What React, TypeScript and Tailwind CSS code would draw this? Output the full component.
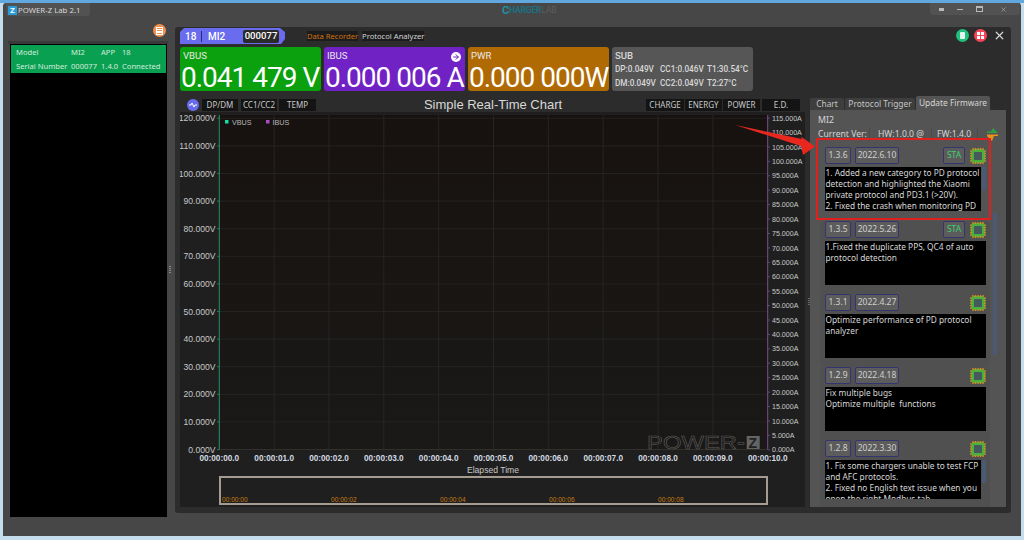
import { ArrowRight, X } from "lucide-react";

const SANS = "font-['Noto_Sans','Open_Sans',sans-serif]";

type Release = {
  version: string;
  date: string;
  stable?: boolean;
  lines: string[];
  boxClass: string;
  scroll?: boolean;
};

const RELEASES: Release[] = [
  {
    version: "1.3.6",
    date: "2022.6.10",
    stable: true,
    scroll: true,
    boxClass: "h-[44px]",
    lines: [
      "1. Added a new category to PD protocol",
      "detection and highlighted the Xiaomi",
      "private protocol and PD3.1 (>20V).",
      "2. Fixed the crash when monitoring PD",
    ],
  },
  {
    version: "1.3.5",
    date: "2022.5.26",
    stable: true,
    boxClass: "h-[44px]",
    lines: ["1.Fixed the duplicate PPS, QC4 of auto", "protocol detection"],
  },
  {
    version: "1.3.1",
    date: "2022.4.27",
    boxClass: "h-[44px]",
    lines: ["Optimize performance of PD protocol", "analyzer"],
  },
  {
    version: "1.2.9",
    date: "2022.4.18",
    boxClass: "h-[44px]",
    lines: ["Fix multiple bugs", "Optimize multiple  functions"],
  },
  {
    version: "1.2.8",
    date: "2022.3.30",
    scroll: true,
    boxClass: "h-[39px]",
    lines: [
      "1. Fix some chargers unable to test FCP",
      "and AFC protocols.",
      "2. Fixed no English text issue when you",
      "open the right Modbus tab",
    ],
  },
];

const X_TICKS = Array.from({ length: 11 }, (_, i) => i);
const LEFT_TICKS = Array.from({ length: 13 }, (_, i) => i * 10);
const RIGHT_TICKS = Array.from({ length: 24 }, (_, i) => i * 5);

function ChipIcon() {
  return (
    <svg width="16" height="16" viewBox="0 0 16 16" className="shrink-0">
      <rect x="1" y="1" width="14" height="14" rx="3.5" fill="#4cb03c" />
      <rect x="4" y="4" width="8" height="8" rx="0.5" fill="#46595c" />
      {[3, 5.5, 8, 10.5, 13].map((p) => (
        <g key={p} fill="#e8901c">
          <circle cx={p} cy="0.9" r="0.85" />
          <circle cx={p} cy="15.1" r="0.85" />
          <circle cx="0.9" cy={p} r="0.85" />
          <circle cx="15.1" cy={p} r="0.85" />
        </g>
      ))}
    </svg>
  );
}

function MetricCard({ label, value, color }: { label: string; value: string; color: string }) {
  return (
    <div className={`h-[44px] w-[141px] rounded-[3px] pl-[3px] pt-[3px] font-['Roboto',sans-serif] ${color}`}>
      <div className="text-[9.6px] leading-[12px] text-[#e8e8e8]">{label}</div>
      <div className="mt-[2px] ml-[-2px] whitespace-nowrap text-[28px] leading-[28px] tracking-[-1px] text-white">
        {value}
      </div>
    </div>
  );
}

function SmallTab({ label, className }: { label: string; className: string }) {
  return (
    <div className={`flex h-[12px] items-center justify-center bg-[#141414] text-[8px] text-[#c8c8c8] ${SANS} ${className}`}>
      {label}
    </div>
  );
}

function Chart() {
  const xAt = (i: number) => 219.3 + i * 54.84;
  const yLeft = (v: number) => 449.5 - v * 2.76;
  const yRight = (v: number) => 449.8 - v * 2.884;
  return (
    <svg width="625" height="364" viewBox="180 112 625 364" className="block">
      <defs>
        <linearGradient id="plot" x1="0" y1="0" x2="0" y2="1">
          <stop offset="0" stopColor="#171210" />
          <stop offset="1" stopColor="#1a1917" />
        </linearGradient>
      </defs>
      <rect x="219.3" y="115" width="548.4" height="334.5" fill="url(#plot)" />
      {X_TICKS.map((i) => (
        <g key={i}>
          <line x1={xAt(i)} x2={xAt(i)} y1="115" y2="451" stroke="#2c2c2c" strokeWidth="0.7" />
          <text
            x={xAt(i)}
            y="461"
            textAnchor="middle"
            fontFamily="Liberation Sans, sans-serif"
            fontWeight="700"
            fontSize="8.2"
            fill="#d4dbe2"
          >
            {`00:00:${String(i).padStart(2, "0")}.0`}
          </text>
        </g>
      ))}
      {LEFT_TICKS.map((v) => (
        <g key={v}>
          <line x1="219.3" x2="767.7" y1={yLeft(v)} y2={yLeft(v)} stroke={v === 0 ? "#3d3a30" : "#2a2a2a"} strokeWidth="0.7" />
          <line x1="217" x2="219.3" y1={yLeft(v)} y2={yLeft(v)} stroke="#1f9c6e" strokeWidth="0.7" />
          <text
            x="215.5"
            y={yLeft(v) + 3}
            textAnchor="end"
            fontFamily="Liberation Sans, sans-serif"
            fontSize="8.6"
            fill="#c8c8c8"
          >
            {v}.000V
          </text>
        </g>
      ))}
      {RIGHT_TICKS.map((v) => (
        <g key={v}>
          <line x1="767.7" x2="770" y1={yRight(v)} y2={yRight(v)} stroke="#8a4a9a" strokeWidth="0.7" />
          <text
            x="772"
            y={yRight(v) + 2.6}
            fontFamily="Liberation Sans, sans-serif"
            fontSize="7.1"
            fill="#c8c8c8"
          >
            {v}.000A
          </text>
        </g>
      ))}
      <line x1="219.3" x2="219.3" y1="115" y2="449.5" stroke="#1f8f68" strokeWidth="1" />
      <line x1="767.7" x2="767.7" y1="115" y2="449.5" stroke="#7b4a8c" strokeWidth="1" />

      <rect x="225" y="120" width="3.5" height="3.5" fill="#10e0a0" />
      <text x="232" y="124.5" fontFamily="Liberation Sans, sans-serif" fontSize="7.2" fill="#b8b8b8">VBUS</text>
      <rect x="266" y="120" width="3.5" height="3.5" fill="#b04ac8" />
      <text x="272.5" y="124.5" fontFamily="Liberation Sans, sans-serif" fontSize="7.2" fill="#b8b8b8">IBUS</text>

      <text
        x="647"
        y="448.5"
        fontFamily="Liberation Sans, sans-serif"
        fontSize="18"
        textLength="98"
        lengthAdjust="spacingAndGlyphs"
        fill="none"
        stroke="#5e5e5e"
        strokeWidth="0.5"
      >
        POWER-
      </text>
      <rect x="746.7" y="436" width="13" height="13" fill="#646464" />
      <text x="748.4" y="447.5" fontFamily="Liberation Sans, sans-serif" fontSize="14" fontWeight="700" fill="#222">Z</text>

      <text
        x="493"
        y="473"
        textAnchor="middle"
        fontFamily="Liberation Sans, sans-serif"
        fontSize="8.6"
        fill="#c8c8c8"
      >
        Elapsed Time
      </text>
    </svg>
  );
}

function ReleaseCard({ release, highlighted }: { release: Release; highlighted: boolean }) {
  return (
    <div
      className={
        highlighted
          ? "mb-px ml-[6px] h-[82px] w-[175px] border-2 border-[#e0201c] pl-[7px] pr-[3px] pt-[7px]"
          : "ml-[10px] w-[170px] rounded-[4px] bg-[#505050] pl-[5px] pr-[4px] pb-[9px]"
      }
    >
      <div className="flex h-[17px] items-center">
        <div className="flex h-[17px] w-[26px] items-center justify-center rounded-[2px] border border-[#34346e] bg-[#5c5c5c] text-[8.5px] text-[#d0d0d0]">
          {release.version}
        </div>
        <div className="ml-[4px] flex h-[17px] w-[44px] items-center justify-center rounded-[2px] border border-[#34346e] bg-[#5c5c5c] text-[8.5px] text-[#d0d0d0]">
          {release.date}
        </div>
        <div className="ml-auto flex items-center gap-[5px]">
          {release.stable && (
            <div className="flex h-[17px] w-[22px] items-center justify-center rounded-[2px] border border-[#34346e] bg-[#5c5c5c] text-[8.5px] text-[#3fd070]">
              STA
            </div>
          )}
          <ChipIcon />
        </div>
      </div>
      <div className="mt-[3px] flex">
        <div
          className={`overflow-hidden bg-black pl-[0.5px] text-[8.3px] leading-[11px] text-[#d8d8d8] ${release.boxClass} ${
            release.scroll ? "w-[156px]" : "w-[161px]"
          }`}
        >
          {release.lines.map((line) => (
            <div key={line} className="whitespace-pre">
              {line}
            </div>
          ))}
        </div>
        {release.scroll && <div className="ml-px h-[23px] w-[4px] bg-[#4a5a74]" />}
      </div>
    </div>
  );
}

function FirmwarePanel() {
  return (
    <div className={`flex w-[196px] flex-col ${SANS}`}>
      <div className="flex h-[13px] items-end">
        <div className="flex h-[12px] w-[34px] items-center justify-center rounded-t-[2px] bg-[#3e3e3e] text-[8.4px] text-[#c4c4c4]">
          Chart
        </div>
        <div className="ml-px flex h-[12px] w-[70px] items-center justify-center rounded-t-[2px] bg-[#3e3e3e] text-[8.4px] text-[#c4c4c4]">
          Protocol Trigger
        </div>
        <div className="ml-px flex h-[14px] w-[74px] items-center justify-center rounded-t-[2px] bg-[#545454] text-[8.4px] text-[#d4d4d4]">
          Update Firmware
        </div>
      </div>
      <div className="relative h-[397px] overflow-hidden bg-[#545454]">
        <div className="pl-[8px] pt-[4px] text-[8.8px] leading-[12px] text-[#d4d4d4]">MI2</div>
        <div className="mt-[2px] flex h-[12px] items-center pl-[8px] pt-px text-[8.6px] text-[#d4d4d4]">
          <span className="w-[47px] whitespace-nowrap">Current Ver:</span>
          <span className="ml-[4px] w-[62px] whitespace-nowrap border-l border-[#4a4a4a] pl-[8px]">HW:1.0.0 @</span>
          <span className="w-[46px] whitespace-nowrap border-l border-[#4a4a4a] pl-[5px]">FW:1.4.0</span>
          <span className="h-[12px] w-px bg-[#4a4a4a]" />
          <svg width="11" height="13" viewBox="0 0 11 13" className="ml-[9px] mt-[-1px]">
            <path d="M6 0 L11 5 H0 V3.5 H4 Z" fill="#2f9e44" />
            <path d="M5 13 L0 8 L0 6.5 H11 V8 H7 Z" fill="#e8921c" />
          </svg>
        </div>
        <div className="mt-[-2px] flex flex-col">
          {RELEASES.map((release, i) => (
            <ReleaseCard key={release.version} release={release} highlighted={i === 0} />
          ))}
        </div>
        <div className="absolute left-[183px] top-[103px] h-[142px] w-[4px] bg-[#4a5a74]" />
      </div>
    </div>
  );
}

export default function App() {
  return (
    <div className="relative h-[540px] w-[1024px] overflow-hidden bg-[#c4dcec]">
      <div className="h-[3px] bg-[#62a8e0]" />
      <div className="ml-[3px] flex h-[533px] w-[1018px] flex-col rounded-t-[3px] bg-[#474747]">
        <div className="flex h-[13px] items-start">
          <div className="ml-[3px] flex h-[13px] w-[84px] items-center gap-px rounded-b-[3px] bg-[#525252] pl-[2px] pt-[2px]">
            <div className="flex h-[9px] w-[9px] items-center justify-center bg-[#2a9ad8] font-['Roboto',sans-serif] text-[8px] font-bold leading-none text-white">
              Z
            </div>
            <span className={`text-[7.8px] text-[#d8d8d8] ${SANS}`}>POWER-Z Lab 2.1</span>
          </div>
          <div className="ml-[412px] flex h-[13px] items-center pt-[2px] font-['Roboto',sans-serif] text-[8.6px] tracking-tight">
            <span className="text-[11px] font-bold leading-none text-[#2090a0]">C</span>
            <span className="font-bold text-[#1f6f80]">HARGER</span>
            <span className="text-[#5c5c5c]">LAB</span>
          </div>
          <div className="ml-auto mr-px flex h-[12px] w-[90px] items-center rounded-b-[3px] bg-[#525252] pl-[9px] text-[#b8b8b8]">
            <span className="h-[3px] w-[5px] bg-[#b8b8b8]" />
            <span className="ml-[13px] h-px w-[6px] bg-[#b8b8b8]" />
            <span className="ml-[13px] h-[6px] w-[7px] border border-t-2 border-[#b8b8b8]" />
            <X size={7} strokeWidth={2} className="ml-[17px]" />
          </div>
        </div>

        <div className="flex flex-1">
          <div className="w-[167px] shrink-0 pl-[7px]">
            <div className="mt-[8px] flex h-[17px] justify-end pr-[4px]">
              <div className="flex h-[13px] w-[13px] items-center justify-center rounded-full bg-[#f09050]">
                <div className="flex h-[8px] w-[7px] flex-col justify-between bg-white p-[1px]">
                  <span className="h-px bg-[#f09050]" />
                  <span className="h-px bg-[#f09050]" />
                  <span className="h-px bg-[#f09050]" />
                </div>
              </div>
            </div>
            <div className="ml-[-2px] h-[3px] w-[160px] bg-[#3a3a3a]" />
            <div className="h-[473px] w-[157px] bg-black p-px">
              <div className={`grid h-[28px] grid-cols-[55px_30px_21px_1fr] content-center gap-y-[3px] bg-[#0aa052] pl-[5px] text-[7.6px] leading-[11px] text-[#d4ecdc] ${SANS}`}>
                <span>Model</span>
                <span>MI2</span>
                <span>APP</span>
                <span>18</span>
                <span>Serial Number</span>
                <span>000077</span>
                <span>1.4.0</span>
                <span>Connected</span>
              </div>
            </div>
          </div>

          <div className="ml-[5px] mt-[11px] h-[486px] w-[836px] rounded-[3px] bg-[#2c2c2c] pl-[5px]">
            <div className="flex h-[20px] items-start pt-px">
              <div className="flex h-[16px] w-[105px] items-center bg-[#6a6cf0] pl-[5px] [clip-path:polygon(4px_0,100px_0,105px_4px,105px_11px,101px_16px,0_16px,0_4px)]">
                <span className="w-[11px] font-['Roboto',sans-serif] text-[10px] font-medium text-white">18</span>
                <span className="ml-[5px] h-[11px] w-px bg-[#2a2a70]" />
                <span className="ml-[6px] w-[35px] font-['Roboto',sans-serif] text-[10px] font-medium text-white">MI2</span>
                <span className="flex h-[13px] w-[36px] items-center justify-center rounded-[2px] bg-[#2a2a2a] font-['Roboto',sans-serif] text-[9.6px] font-medium text-white">
                  000077
                </span>
              </div>
              <div className={`ml-[22px] mt-[3px] bg-[#1c1c1c] text-[7.6px] leading-[10px] text-[#d07010] ${SANS}`}>Data Recorder</div>
              <div className={`ml-[4px] mt-[3px] bg-[#1c1c1c] text-[7.6px] leading-[10px] text-[#d4d4d4] ${SANS}`}>Protocol Analyzer</div>
              <div className="ml-auto mr-[2px] mt-[1px] flex items-center">
                <div className="flex h-[13px] w-[13px] items-center justify-center rounded-full bg-[#20c07c]">
                  <div className="h-[7px] w-[5px] rounded-[1px] bg-[#e4f4ec]" />
                </div>
                <div className="ml-[5px] grid h-[13px] w-[13px] grid-cols-2 place-items-center rounded-full bg-[#f84454] p-[2.5px]">
                  <span className="h-[3px] w-[3px] bg-white" />
                  <span className="h-[3px] w-[3px] bg-white" />
                  <span className="h-[3px] w-[3px] bg-white" />
                  <span className="h-[3px] w-[3px] bg-white" />
                </div>
                <X size={13} strokeWidth={2.2} className="ml-[6px] mr-[3px] text-[#d8d8d8]" />
              </div>
            </div>

            <div className="flex gap-[3px]">
              <MetricCard label="VBUS" value="0.041 479 V" color="bg-[#0aa00e]" />
              <div className="relative">
                <MetricCard label="IBUS" value="0.000 006 A" color="bg-[#7022c4]" />
                <div className="absolute right-[4px] top-[5px] flex h-[10px] w-[10px] items-center justify-center rounded-full bg-white text-[#7022c4]">
                  <ArrowRight size={8} strokeWidth={3} />
                </div>
              </div>
              <MetricCard label="PWR" value="0.000 000W" color="bg-[#b06a04]" />
              <div className="h-[44px] w-[141px] rounded-[3px] bg-[#565656] pl-[3px] pt-[3px] font-['Roboto',sans-serif] font-medium text-[#d8d8d8]">
                <div className="text-[9.6px] leading-[12px]">SUB</div>
                <div className="flex whitespace-nowrap text-[8.2px] leading-[14px]">
                  <span className="w-[45px]">DP:0.049V</span>
                  <span className="w-[47px]">CC1:0.046V</span>
                  <span>T1:30.54°C</span>
                </div>
                <div className="flex whitespace-nowrap text-[8.2px] leading-[14px]">
                  <span className="w-[45px]">DM:0.049V</span>
                  <span className="w-[47px]">CC2:0.049V</span>
                  <span>T2:27°C</span>
                </div>
              </div>
            </div>

            <div className="mt-[6px] flex">
              <div className="flex w-[625px] flex-col bg-[#1f1f1f]">
                <div className="flex h-[15px] items-center bg-[#2c2c2c]">
                  <div className="ml-[7px] flex h-[12px] w-[12px] items-center justify-center rounded-full bg-[#6a6cf0]">
                    <svg width="8" height="6" viewBox="0 0 8 6">
                      <path d="M0 3 H2 L3 1 L5 5 L6 3 H8" fill="none" stroke="#fff" strokeWidth="1" />
                    </svg>
                  </div>
                  <SmallTab label="DP/DM" className="ml-[3px] w-[36px]" />
                  <SmallTab label="CC1/CC2" className="ml-[3px] w-[36px]" />
                  <SmallTab label="TEMP" className="ml-[2px] w-[37px]" />
                  <div className="w-[330px] pl-[24px] text-center font-['Liberation_Sans',sans-serif] text-[13px] leading-[15px] text-[#d8d8d8]">
                    Simple Real-Time Chart
                  </div>
                  <SmallTab label="CHARGE" className="w-[38px]" />
                  <SmallTab label="ENERGY" className="ml-px w-[37px]" />
                  <SmallTab label="POWER" className="ml-px w-[37px]" />
                  <SmallTab label="E.D." className="ml-[2px] w-[38px]" />
                </div>
                <Chart />
                <div className="ml-[39px] h-[29px] w-[549px] border-2 border-[#a49c90] pt-[18px]">
                  <div className="flex font-['Liberation_Sans',sans-serif] text-[6.6px] leading-[8px] text-[#c87c10]">
                    <span className="w-[109.5px] pl-[1px]">00:00:00</span>
                    <span className="w-[109.5px] pl-[1px]">00:00:02</span>
                    <span className="w-[109.5px] pl-[1px]">00:00:04</span>
                    <span className="w-[109.5px] pl-[1px]">00:00:06</span>
                    <span className="w-[109.5px] pl-[1px]">00:00:08</span>
                  </div>
                </div>
              </div>
              <div className="ml-[5px]">
                <FirmwarePanel />
              </div>
            </div>
          </div>
        </div>
      </div>

      <div className="absolute left-[169px] top-[266px] flex flex-col gap-px">
        <span className="h-px w-[2px] bg-[#8a8a8a]" />
        <span className="h-px w-[2px] bg-[#8a8a8a]" />
        <span className="h-px w-[2px] bg-[#8a8a8a]" />
        <span className="h-px w-[2px] bg-[#8a8a8a]" />
      </div>
      <div className="absolute left-[808px] top-[298px] flex flex-col gap-px">
        <span className="h-px w-[2px] bg-[#6a6a6a]" />
        <span className="h-px w-[2px] bg-[#6a6a6a]" />
        <span className="h-px w-[2px] bg-[#6a6a6a]" />
        <span className="h-px w-[2px] bg-[#6a6a6a]" />
      </div>

      <svg width="1024" height="540" className="pointer-events-none absolute inset-0">
        <path d="M735 125 L802 139 L801 136.5 L815 146.5 L803 155 L801 146 Z" fill="#e8281e" />
      </svg>
    </div>
  );
}
